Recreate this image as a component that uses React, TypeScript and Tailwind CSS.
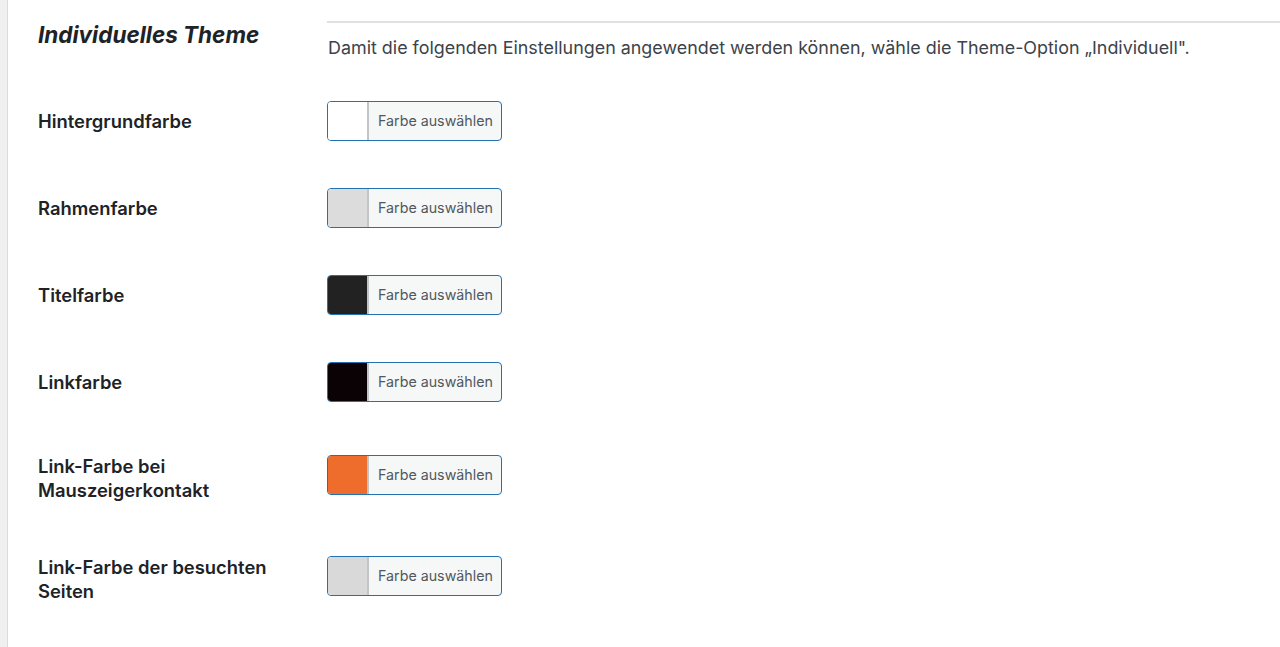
import React from "react";

const font = { fontFamily: 'Inter, "Noto Sans", "Liberation Sans", sans-serif' };

type Row = { label: string[]; color: string };

const rows: Row[] = [
  { label: ["Hintergrundfarbe"], color: "bg-[#ffffff]" },
  { label: ["Rahmenfarbe"], color: "bg-[#dcdcdc]" },
  { label: ["Titelfarbe"], color: "bg-[#222222]" },
  { label: ["Linkfarbe"], color: "bg-[#0a0204]" },
  { label: ["Link-Farbe bei", "Mauszeigerkontakt"], color: "bg-[#ee6d2c]" },
  { label: ["Link-Farbe der besuchten", "Seiten"], color: "bg-[#d9d9d9]" },
];

function ColorButton({ color }: { color: string }) {
  return (
    <div className="flex h-[40px] w-[175px] overflow-hidden rounded-[4px] border border-[#2271b1] bg-[#f6f7f7]">
      <div className={`w-[41px] h-full ${color} border-r-2 border-[#c3c4c7]`} />
      <div className="flex flex-1 items-center pl-[9px] text-[14.25px] text-[#50575e]">Farbe auswählen</div>
    </div>
  );
}

export default function App() {
  return (
    <div className="flex min-h-[647px] w-[1280px] bg-white" style={font}>
      <div className="w-[8px] shrink-0 bg-[#f0f0f1] border-r border-[#dcdcde]" />
      <div className="flex-1 pl-[30px]">
        <div className="flex">
          <div className="w-[289px] shrink-0 pt-[20px]">
            <h2 className="text-[22.5px] leading-[30px] font-bold italic text-[#1d2327]">Individuelles Theme</h2>
          </div>
          <div className="flex-1">
            <div className="mt-[21px] h-[2px] bg-[#e0e0e0]" />
            <p className="pt-[13px] pl-[1px] text-[17.9px] leading-[24px] text-[#3c434a]">
              Damit die folgenden Einstellungen angewendet werden können, wähle die Theme-Option „Individuell".
            </p>
          </div>
        </div>
        <div className="flex flex-col">
          {rows.map((r, i) => {
            const mt =
              i === 0 ? "mt-[41px]" : i === 4 ? "mt-[45px]" : i === 5 ? "mt-[46px]" : "mt-[47px]";
            const two = r.label.length > 1;
            return (
              <div key={i} className={`flex items-center ${mt}`}>
                <div
                  className={`w-[289px] shrink-0 text-[18.4px] leading-[24px] font-semibold text-[#1d2327] ${
                    two ? "pt-[7px]" : ""
                  }`}
                >
                  {r.label.map((l, j) => (
                    <div key={j}>{l}</div>
                  ))}
                </div>
                <ColorButton color={r.color} />
              </div>
            );
          })}
        </div>
      </div>
    </div>
  );
}
